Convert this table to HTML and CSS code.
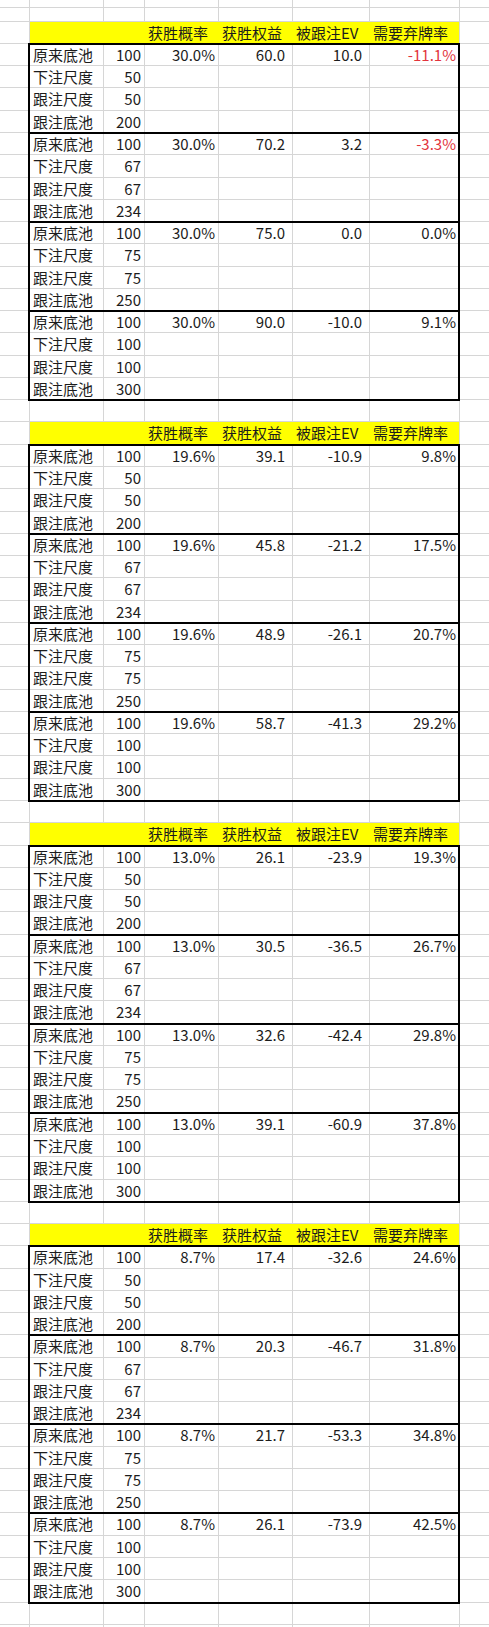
FILE: index.html
```html
<!DOCTYPE html>
<html lang="zh-CN">
<head>
<meta charset="utf-8">
<title>弃牌率表</title>
<link rel="stylesheet" href="styles.css">
</head>
<body>
<div class="sheet" id="sheet">
  <div class="row top1"><div class="c"></div><div class="c"></div><div class="c"></div><div class="c"></div><div class="c"></div><div class="c"></div><div class="c"></div><div class="c"></div></div>
  <div class="row top2"><div class="c"></div><div class="c"></div><div class="c"></div><div class="c"></div><div class="c"></div><div class="c"></div><div class="c"></div><div class="c"></div></div>
</div>
<script src="app.js"></script>
</body>
</html>
```

FILE: app.js
```js
(function () {
  var blocks = [
    { p: "30.0%", g: [["60.0", "10.0", "-11.1%", true], ["70.2", "3.2", "-3.3%", true], ["75.0", "0.0", "0.0%"], ["90.0", "-10.0", "9.1%"]] },
    { p: "19.6%", g: [["39.1", "-10.9", "9.8%"], ["45.8", "-21.2", "17.5%"], ["48.9", "-26.1", "20.7%"], ["58.7", "-41.3", "29.2%"]] },
    { p: "13.0%", g: [["26.1", "-23.9", "19.3%"], ["30.5", "-36.5", "26.7%"], ["32.6", "-42.4", "29.8%"], ["39.1", "-60.9", "37.8%"]] },
    { p: "8.7%", g: [["17.4", "-32.6", "24.6%"], ["20.3", "-46.7", "31.8%"], ["21.7", "-53.3", "34.8%"], ["26.1", "-73.9", "42.5%"]] }
  ];
  var sizes = [[50, 200], [67, 234], [75, 250], [100, 300]];
  var labels = ["原来底池", "下注尺度", "跟注尺度", "跟注底池"];
  var sheet = document.getElementById("sheet");

  function cell(text, cls) {
    var d = document.createElement("div");
    d.className = "c" + (cls ? " " + cls : "");
    if (text) d.textContent = text;
    return d;
  }
  function row(cells, cls) {
    var r = document.createElement("div");
    r.className = "row" + (cls ? " " + cls : "");
    cells.forEach(function (c) { r.appendChild(c); });
    return r;
  }
  function blank() {
    var a = [];
    for (var i = 0; i < 8; i++) a.push(cell(""));
    return row(a);
  }

  blocks.forEach(function (b) {
    sheet.appendChild(row([
      cell(""), cell("", "y"), cell("", "y"),
      cell("获胜概率", "y"), cell("获胜权益", "y"), cell("被跟注EV", "y"), cell("需要弃牌率", "y ylast"),
      cell("")
    ], "hdr"));
    b.g.forEach(function (g, gi) {
      var grp = document.createElement("div");
      grp.className = "group";
      var vals = [100, sizes[gi][0], sizes[gi][0], sizes[gi][1]];
      for (var k = 0; k < 4; k++) {
        var first = k === 0;
        grp.appendChild(row([
          cell(""),
          cell(labels[k], "t"),
          cell(String(vals[k]), "n"),
          cell(first ? b.p : "", "n"),
          cell(first ? g[0] : "", "n d"),
          cell(first ? g[1] : "", "n d"),
          cell(first ? g[2] : "", "n" + (first && g[3] ? " red" : "")),
          cell("")
        ]));
      }
      sheet.appendChild(grp);
    });
    sheet.appendChild(blank());
  });
  sheet.appendChild(blank());
})();
```

FILE: styles.css
```css
html, body {
  margin: 0;
  padding: 0;
  background: #ffffff;
}
body {
  width: 489px;
  height: 1627px;
  overflow: hidden;
  font-family: "Noto Sans CJK SC", "Microsoft YaHei", sans-serif;
  font-size: 15px;
  color: #1c1c1c;
}
.sheet {
  width: 490px;
}
.row {
  display: grid;
  grid-template-columns: 30px 74px 41px 74px 74px 77px 90px 30px;
  height: 22.28px;
}
.top1 { height: 8px; }
.top2 { height: 13.7px; }
.c {
  box-sizing: border-box;
  border-right: 1px solid #d6d6d6;
  border-bottom: 1px solid #d6d6d6;
  padding: 0 3px;
  line-height: 21px;
  white-space: nowrap;
  overflow: hidden;
}
.t { text-align: left; }
.n { text-align: right; }
.d { padding-right: 7px; }
.red { color: #e2343c; }
.hdr .y {
  background: #ffff00;
  border-right-color: #ffff00;
  border-bottom-color: #ffff00;
}
.hdr .ylast {
  border-right-color: #d6d6d6;
}
.group {
  position: relative;
}
.group::after {
  content: "";
  position: absolute;
  left: 28px;
  width: 432px;
  top: -1px;
  bottom: -1px;
  box-sizing: border-box;
  border: 2px solid #000000;
  pointer-events: none;
}
```
